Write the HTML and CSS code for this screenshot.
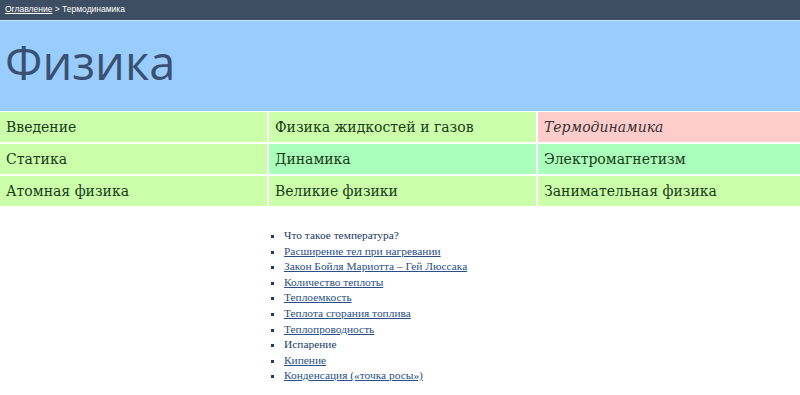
FILE: index.html
```html
<!DOCTYPE html>
<html lang="ru">
<head>
<meta charset="utf-8">
<title>Физика</title>
<link rel="stylesheet" href="styles.css">
</head>
<body>
<div class="topbar"><a href="#">Оглавление</a> &gt; Термодинамика</div>
<div class="header"><h1>Физика</h1></div>
<div class="grid">
  <a class="cell green" href="#">Введение</a>
  <a class="cell green" href="#">Физика жидкостей и газов</a>
  <span class="cell pink current">Термодинамика</span>
  <a class="cell green" href="#">Статика</a>
  <a class="cell mint" href="#">Динамика</a>
  <a class="cell mint" href="#">Электромагнетизм</a>
  <a class="cell green" href="#">Атомная физика</a>
  <a class="cell green" href="#">Великие физики</a>
  <a class="cell green" href="#">Занимательная физика</a>
</div>
<div class="content">
  <ul class="topics">
    <li><span class="plain">Что такое температура?</span></li>
    <li><a href="#">Расширение тел при нагревании</a></li>
    <li><a href="#">Закон Бойля Мариотта – Гей Люссака</a></li>
    <li><a href="#">Количество теплоты</a></li>
    <li><a href="#">Теплоемкость</a></li>
    <li><a href="#">Теплота сгорания топлива</a></li>
    <li><a href="#">Теплопроводность</a></li>
    <li><span class="plain">Испарение</span></li>
    <li><a href="#">Кипение</a></li>
    <li><a href="#">Конденсация («точка росы»)</a></li>
  </ul>
</div>
</body>
</html>
```
FILE: styles.css
```css
html, body {
  margin: 0;
  padding: 0;
  background: #ffffff;
}
.topbar {
  height: 21px;
  box-sizing: border-box;
  background: #3d4d62;
  border-bottom: 1px solid #c8e4f0;
  color: #ffffff;
  font-family: "Liberation Sans", Arial, sans-serif;
  font-size: 8.5px;
  line-height: 19px;
  padding-left: 5px;
}
.topbar a {
  color: #ffffff;
  text-decoration: underline;
}
.header {
  background: #99ccff;
  height: 90px;
  display: flex;
  align-items: center;
  border-bottom: 1px solid #ffffff;
}
.header h1 {
  margin: 0 0 8px 5px;
  font-family: "Open Sans", "DejaVu Sans", sans-serif;
  font-weight: 400;
  font-size: 47px;
  color: #3a5070;
}
.grid {
  display: grid;
  grid-template-columns: 267px 267px 1fr;
  gap: 2px;
  background: #ffffff;
}
.cell {
  height: 30px;
  display: flex;
  align-items: center;
  padding-left: 6px;
  font-family: "DejaVu Serif", Georgia, serif;
  font-size: 14px;
  color: #1a3a1a;
  text-decoration: none;
}
.green { background: #ccffaa; }
.mint { background: #aaffbb; }
.pink { background: #ffcccc; }
.current { font-style: italic; color: #333333; }
.content {
  padding-top: 22px;
  padding-left: 270px;
}
.topics {
  margin: 0;
  padding: 0 0 0 14px;
  list-style: square;
  font-family: "Liberation Serif", "Times New Roman", serif;
  font-size: 11.4px;
  line-height: 15.6px;
  color: #223a66;
}
.topics a {
  color: #2a4f86;
  text-decoration: underline;
}
.plain { color: #223a66; }
```
